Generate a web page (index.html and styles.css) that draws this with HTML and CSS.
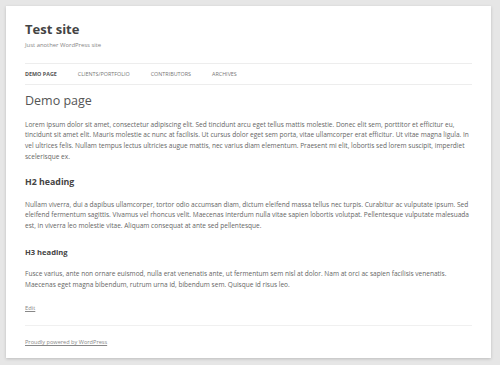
FILE: index.html
```html
<!DOCTYPE html>
<html lang="en">
<head>
<meta charset="utf-8">
<title>Test site</title>
<link rel="stylesheet" href="styles.css">
</head>
<body>
<div class="page">
  <header class="site-header">
    <h1 class="site-title">Test site</h1>
    <p class="site-description">Just another WordPress site</p>
    <nav class="main-nav">
      <a class="nav-item current" href="#">Demo Page</a>
      <a class="nav-item" href="#">Clients/Portfolio</a>
      <a class="nav-item" href="#">Contributors</a>
      <a class="nav-item" href="#">Archives</a>
    </nav>
  </header>
  <main class="content">
    <h2 class="entry-title">Demo page</h2>
    <p class="para p1">Lorem ipsum dolor sit amet, consectetur adipiscing elit. Sed tincidunt arcu eget tellus mattis molestie. Donec elit sem, porttitor et efficitur eu, tincidunt sit amet elit. Mauris molestie ac nunc at facilisis. Ut cursus dolor eget sem porta, vitae ullamcorper erat efficitur. Ut vitae magna ligula. In vel ultrices felis. Nullam tempus lectus ultricies augue mattis, nec varius diam elementum. Praesent mi elit, lobortis sed lorem suscipit, imperdiet scelerisque ex.</p>
    <h3 class="h2">H2 heading</h3>
    <p class="para p2">Nullam viverra, dui a dapibus ullamcorper, tortor odio accumsan diam, dictum eleifend massa tellus nec turpis. Curabitur ac vulputate ipsum. Sed eleifend fermentum sagittis. Vivamus vel rhoncus velit. Maecenas interdum nulla vitae sapien lobortis volutpat. Pellentesque vulputate malesuada est, in viverra leo molestie vitae. Aliquam consequat at ante sed pellentesque.</p>
    <h4 class="h3">H3 heading</h4>
    <p class="para p3">Fusce varius, ante non ornare euismod, nulla erat venenatis ante, ut fermentum sem nisl at dolor. Nam at orci ac sapien facilisis venenatis. Maecenas eget magna bibendum, rutrum urna id, bibendum sem. Quisque id risus leo.</p>
    <p class="edit"><a href="#">Edit</a></p>
  </main>
  <footer class="site-footer">
    <a href="#">Proudly powered by WordPress</a>
  </footer>
</div>
</body>
</html>
```

FILE: styles.css
```css
html, body {
  margin: 0;
  padding: 0;
}
body {
  background: #e6e6e6;
  padding: 6px 9px 7px 6px;
  font-family: "Open Sans", "Liberation Sans", sans-serif;
  color: #666;
}
.page {
  background: #fff;
  height: 352px;
  box-sizing: border-box;
  padding: 15px 19px 0 19px;
  box-shadow: 0 1px 3px rgba(0, 0, 0, 0.18);
}
.site-title {
  margin: 0;
  font-size: 13px;
  line-height: 16px;
  font-weight: 700;
  color: #444;
}
.site-description {
  margin: 3px 0 0;
  font-size: 5.9px;
  line-height: 10px;
  color: #858585;
}
.main-nav {
  display: flex;
  gap: 21px;
  margin-top: 13px;
  border-top: 1px solid #ededed;
  border-bottom: 1px solid #ededed;
  height: 20px;
  align-items: center;
}
.nav-item {
  font-size: 5.4px;
  text-transform: uppercase;
  color: #777;
  text-decoration: none;
}
.nav-item.current {
  color: #555;
  font-weight: 700;
}
.entry-title {
  margin: 8px 0 0;
  font-size: 12.5px;
  line-height: 16px;
  font-weight: 400;
  color: #555;
}
.para {
  margin: 0;
  font-size: 6.55px;
  line-height: 10.7px;
  color: #666;
}
.p1 { margin-top: 10.6px; }
.h2 {
  margin: 13.5px 0 0;
  font-size: 8.8px;
  line-height: 12px;
  font-weight: 700;
  color: #444;
}
.p2 { margin-top: 11.6px; }
.h3 {
  margin: 14.2px 0 0;
  font-size: 7.6px;
  line-height: 12px;
  font-weight: 700;
  color: #444;
}
.p3 { margin-top: 11.6px; }
.edit {
  margin: 12.6px 0 0;
  font-size: 5.8px;
  line-height: 10.7px;
}
.edit a,
.site-footer a {
  color: #888;
}
.content {
  border-bottom: 1px solid #f0f0f0;
  padding-bottom: 10.6px;
}
.site-footer {
  margin-top: 11.6px;
  font-size: 5.6px;
  line-height: 10.7px;
}
```
